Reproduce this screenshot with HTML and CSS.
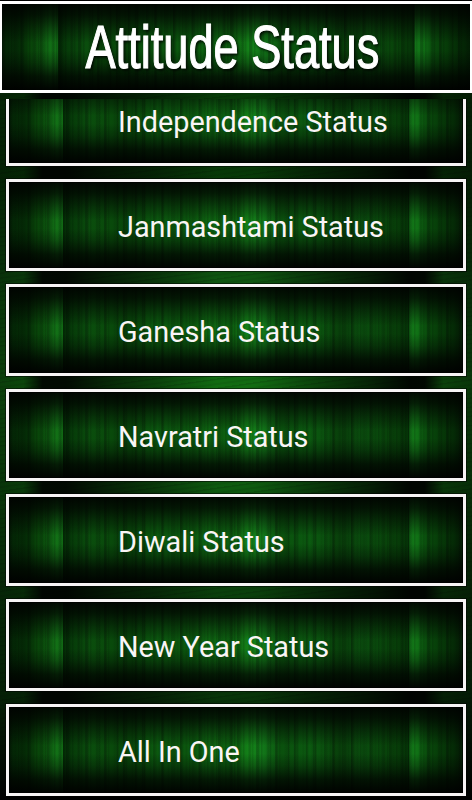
FILE: index.html
```html
<!DOCTYPE html>
<html lang="en">
<head>
<meta charset="utf-8">
<title>Attitude Status</title>
<link rel="stylesheet" href="styles.css">
</head>
<body>
<div class="app">
  <header class="header panel"><h1 class="title">Attitude Status</h1></header>
  <main class="list">
    <div class="item panel">Independence Status</div>
    <div class="item panel">Janmashtami Status</div>
    <div class="item panel">Ganesha Status</div>
    <div class="item panel">Navratri Status</div>
    <div class="item panel">Diwali Status</div>
    <div class="item panel">New Year Status</div>
    <div class="item panel">All In One</div>
  </main>
</div>
</body>
</html>
```
FILE: styles.css
```css
* { box-sizing: border-box; }

body { margin: 0; background: #000; }

.app {
  width: 472px;
  height: 800px;
  overflow: hidden;
  display: flex;
  flex-direction: column;
  padding-top: 1px;
  background:
    repeating-linear-gradient(172deg, rgba(0,0,0,.12) 0 1px, transparent 2px 4px, rgba(0,0,0,.08) 5px 6px, transparent 7px 9px),
    linear-gradient(90deg, rgba(0,0,0,.42) 0, rgba(0,0,0,.35) 5%, rgba(0,0,0,.9) 9%, rgba(0,0,0,.9) 14%, rgba(0,0,0,.65) 22%, rgba(0,0,0,.35) 34%, rgba(0,0,0,0) 46% 54%, rgba(0,0,0,.3) 64%, rgba(0,0,0,.65) 78%, rgba(0,0,0,.94) 87%, rgba(0,0,0,.92) 90%, rgba(0,0,0,.4) 94%, rgba(0,0,0,.5) 100%),
    linear-gradient(180deg, #000 0, #083c08 95px, #073807 170px, #0e5410 275px, #126c12 385px, #0e5a0f 488px, #0a400b 590px, #083509 695px, #000 798px);
}

.panel {
  border: 3px solid #f7f4f5;
  background-origin: padding-box;
  background-clip: padding-box;
  background-repeat: no-repeat;
  background-image:
    linear-gradient(180deg, rgba(0,0,0,.9) 0, rgba(0,2,0,.74) 13%, rgba(0,0,0,.35) 29%, rgba(0,0,0,0) 45% 54%, rgba(0,0,0,.28) 68%, rgba(0,2,0,.75) 84%, rgba(0,0,0,.96) 100%),
    repeating-linear-gradient(90deg, rgba(0,0,0,.12) 0 1px, transparent 2px 5px, rgba(0,0,0,.07) 6px 7px, transparent 8px 9px),
    repeating-linear-gradient(90deg, rgba(0,0,0,.2) 0 2px, transparent 4px 11px, rgba(0,0,0,.12) 12px 14px, transparent 15px 19px),
    linear-gradient(90deg,
      #032405 0, #042e06 4%, #084309 6%, #0b500d 8%, #127016 10.5%, #106814 11.9%,
      #032c05 12%, #063c09 14%, #0a4d0d 18%, #094a0b 22%, #08460a 27%, #0b590f 32%,
      #0b560e 39%, #0e6712 45%, #0c5a0f 49%, #148319 53%, #127619 56%, #0a500d 60%,
      #0b5a10 66%, #0a520e 69%, #083e0a 73%, #0a4d0e 78%, #08430a 84%, #053307 88%,
      #137819 88.3%, #107015 90%, #094b0c 92%, #063b08 95%, #031e04 100%);
}

.header {
  flex: none;
  height: 92px;
  border-width: 3px 2px;
  border-color: #fff;
  display: flex;
  align-items: center;
  justify-content: center;
}

.title {
  margin: 0 8px 0 0;
  font: 400 61px/86px "Liberation Sans", Arial, sans-serif;
  color: #fff;
  -webkit-text-stroke: 1.2px #fff;
  white-space: nowrap;
  text-shadow: 2px 2px 4px #000;
  transform: scaleX(.741);
}

.list {
  margin-top: 6px;
  height: 701px;
  overflow: hidden;
  padding: 0 6px;
  display: flex;
  flex-direction: column;
  gap: 13px;
}

.item {
  flex: none;
  height: 92px;
  padding-left: 109px;
  font: 400 28.8px/91px Roboto, sans-serif;
  color: #faf5f6;
  white-space: nowrap;
  box-shadow: 0 0 0 1px rgba(0,0,0,.5), inset 0 0 0 1px rgba(0,0,0,.55);
}

.item:first-child { margin-top: -25px; }
```
